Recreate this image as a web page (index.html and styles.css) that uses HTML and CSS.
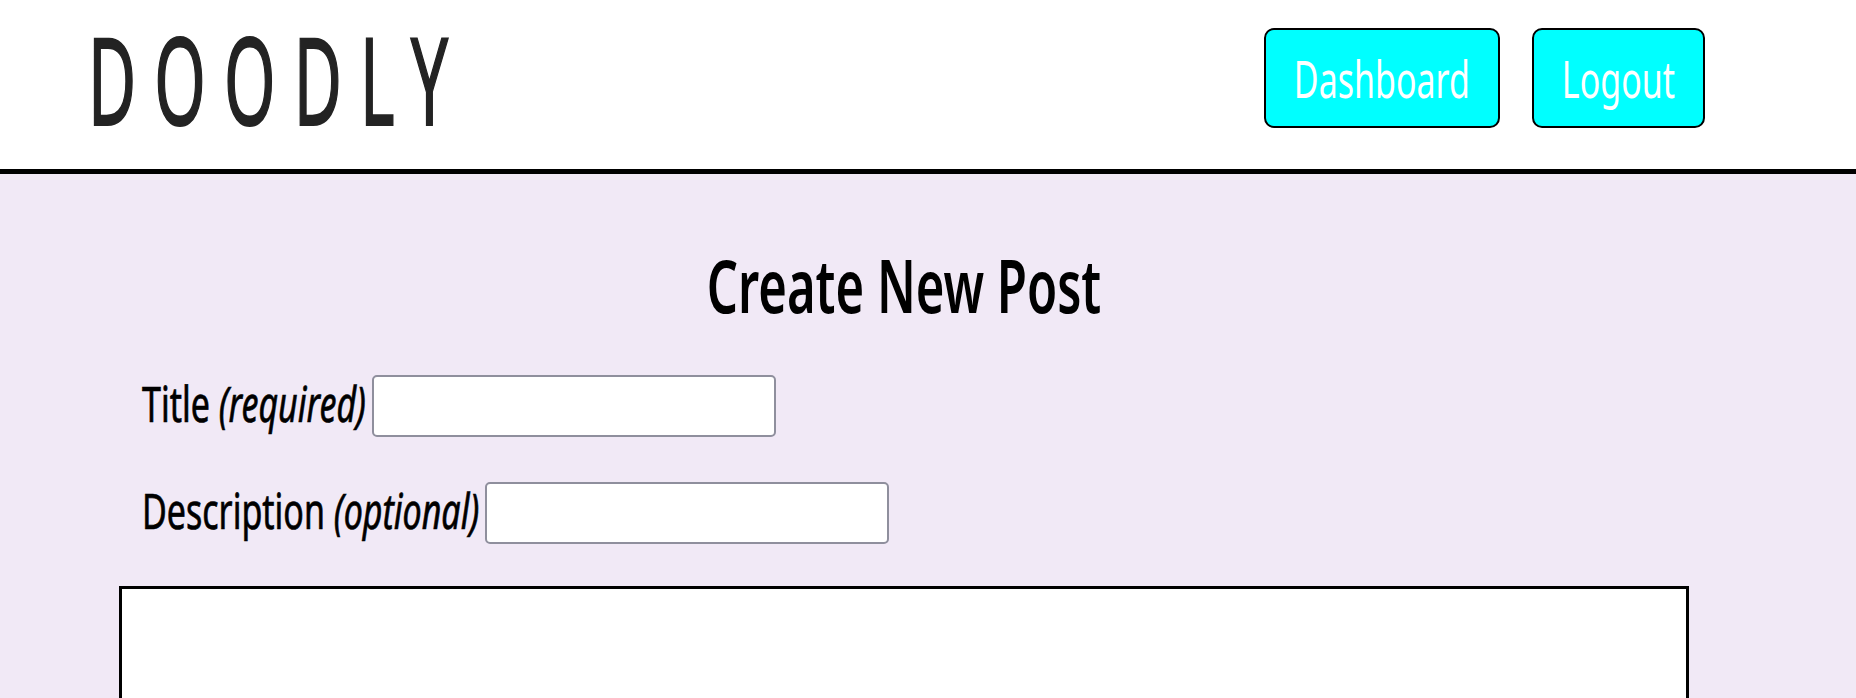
FILE: index.html
```html
<!DOCTYPE html>
<html lang="en">
<head>
<meta charset="utf-8">
<title>Doodly - Create New Post</title>
<link rel="stylesheet" href="styles.css">
</head>
<body>
<header class="site-header">
  <div class="logo"><span class="logo-text">DOODLY</span></div>
  <nav class="nav">
    <a class="nav-btn" href="#"><span class="nav-text">Dashboard</span></a>
    <a class="nav-btn" href="#"><span class="nav-text">Logout</span></a>
  </nav>
</header>
<main class="page">
  <form class="post-form">
    <h1 class="page-title">Create New Post</h1>
    <div class="field">
      <label class="field-label" for="title">Title <em>(required)</em></label>
      <input class="field-input" id="title" type="text">
    </div>
    <div class="field">
      <label class="field-label" for="desc">Description <em>(optional)</em></label>
      <input class="field-input" id="desc" type="text">
    </div>
    <div class="canvas"></div>
  </form>
</main>
</body>
</html>
```

FILE: styles.css
```css
html, body {
  margin: 0;
  padding: 0;
}

body {
  background: #f1e9f6;
  font-family: "Noto Sans", "DejaVu Sans", sans-serif;
  color: #000;
}

/* Header */
.site-header {
  display: flex;
  justify-content: space-between;
  align-items: flex-start;
  height: 169px;
  padding: 0 151px 0 88px;
  background: #fff;
  border-bottom: 5px solid #000;
}

.logo {
  margin-top: 19px;
  font-size: 120px;
  line-height: 120px;
  font-weight: 400;
  color: #232323;
}

.logo-text {
  display: inline-block;
  letter-spacing: 33px;
  transform: scaleX(0.55);
  transform-origin: left center;
  -webkit-text-stroke: 2px #232323;
}

.nav {
  display: flex;
  gap: 32px;
  margin-top: 28px;
}

.nav-btn {
  display: block;
  height: 82px;
  padding: 14px 28px 0;
  line-height: 82px;
  font-size: 34px;
  color: #fff;
  text-decoration: none;
  background: #00ffff;
  border: 2px solid #000;
  border-radius: 10px;
}

.nav-text {
  display: inline-block;
  transform: scaleY(1.52);
  transform-origin: center 54px;
}

/* Main form */
.page {
  padding: 70px 0 0 119px;
}

.post-form {
  width: 1570px;
}

.page-title {
  margin: 0;
  text-align: center;
  font-size: 49px;
  line-height: 100px;
  font-weight: 600;
  transform: scaleY(1.5);
  transform-origin: center 69px;
}

.field {
  display: flex;
  align-items: flex-start;
  gap: 6px;
  padding-left: 23px;
  margin-top: 31px;
}

.field + .field {
  margin-top: 42px;
}

.field-label {
  margin-top: 3px;
  font-size: 34px;
  line-height: 62px;
  transform: scaleY(1.44);
  transform-origin: left 44px;
  -webkit-text-stroke: 0.5px #000;
}

.field-label em {
  font-style: italic;
}

.field-input {
  box-sizing: border-box;
  width: 404px;
  height: 62px;
  margin: 0;
  background: #fff;
  border: 2px solid #8f8f9d;
  border-radius: 5px;
}

.canvas {
  box-sizing: border-box;
  height: 500px;
  margin-top: 39px;
  background: #fff;
  border: 3px solid #000;
}
```
